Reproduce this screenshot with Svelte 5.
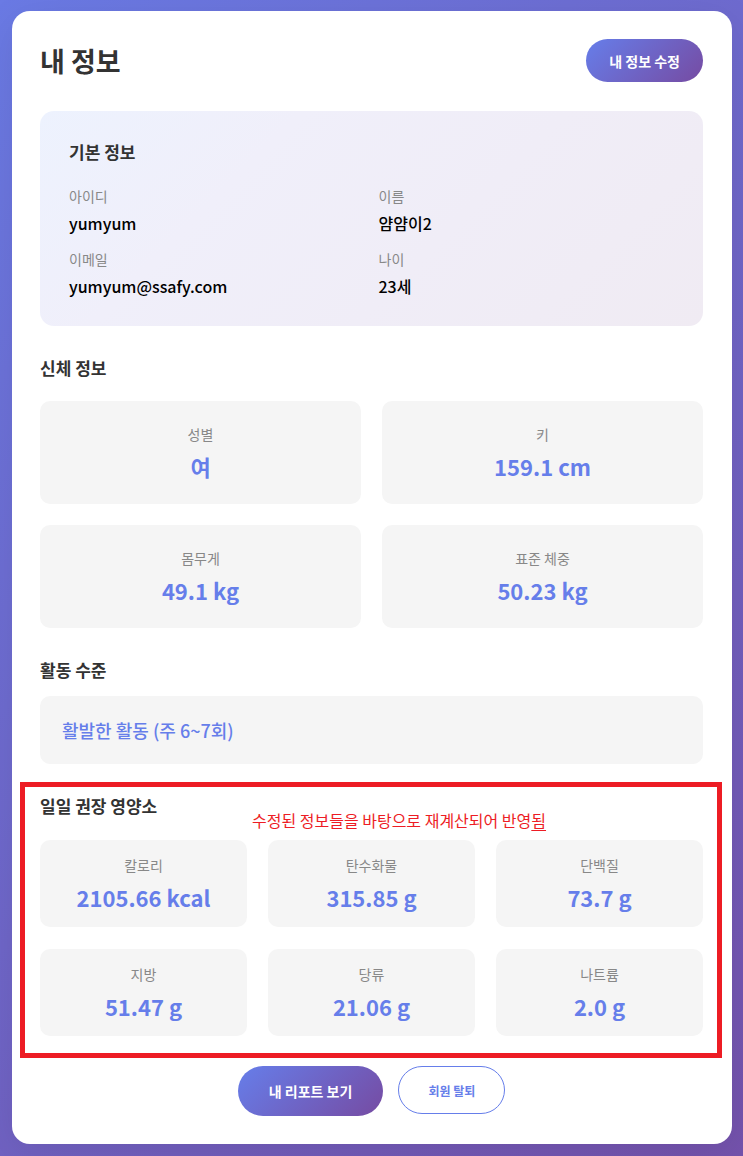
<script>
  const profile = [
    { label: '아이디', value: 'yumyum' },
    { label: '이름', value: '얌얌이2' },
    { label: '이메일', value: 'yumyum@ssafy.com' },
    { label: '나이', value: '23세' }
  ];
  const body = [
    { label: '성별', value: '여' },
    { label: '키', value: '159.1 cm' },
    { label: '몸무게', value: '49.1 kg' },
    { label: '표준 체중', value: '50.23 kg' }
  ];
  const nutrients = [
    { label: '칼로리', value: '2105.66 kcal' },
    { label: '탄수화물', value: '315.85 g' },
    { label: '단백질', value: '73.7 g' },
    { label: '지방', value: '51.47 g' },
    { label: '당류', value: '21.06 g' },
    { label: '나트륨', value: '2.0 g' }
  ];
</script>

<div class="page">
  <main class="card">
    <header>
      <h1>내 정보</h1>
      <button class="primary edit" type="button">내 정보 수정</button>
    </header>

    <section class="basic">
      <h2>기본 정보</h2>
      <dl class="profile">
        {#each profile as item}
          <div>
            <dt>{item.label}</dt>
            <dd>{item.value}</dd>
          </div>
        {/each}
      </dl>
    </section>

    <section class="body-info">
      <h2>신체 정보</h2>
      <dl class="tiles two">
        {#each body as item}
          <div class="tile">
            <dt>{item.label}</dt>
            <dd>{item.value}</dd>
          </div>
        {/each}
      </dl>
    </section>

    <section class="activity">
      <h2>활동 수준</h2>
      <p>활발한 활동 (주 6~7회)</p>
    </section>

    <section class="nutrition">
      <h2>일일 권장 영양소</h2>
      <p class="note">수정된 정보들을 바탕으로 재계산되어 반영<u>됨</u></p>
      <dl class="tiles three">
        {#each nutrients as item}
          <div class="tile">
            <dt>{item.label}</dt>
            <dd>{item.value}</dd>
          </div>
        {/each}
      </dl>
    </section>

    <footer>
      <button class="primary report" type="button">내 리포트 보기</button>
      <button class="outline" type="button">회원 탈퇴</button>
    </footer>
  </main>
</div>

<style>
  :global(body) {
    margin: 0;
    font-family: 'Noto Sans CJK KR', 'Noto Sans', sans-serif;
  }
  * {
    box-sizing: border-box;
  }
  .page {
    min-height: 100vh;
    padding: 11px 11px 12px 12px;
    overflow: hidden;
    background: linear-gradient(135deg, #6a7ae4 0%, #7452ac 100%);
  }
  .card {
    padding: 28px 29px 28px 28px;
    border-radius: 18px;
    background: #fff;
    box-shadow: 0 10px 40px rgba(0, 0, 0, 0.08);
  }
  header {
    display: flex;
    justify-content: space-between;
    align-items: center;
    margin-bottom: 29px;
  }
  h1, h2, p, dl, dd {
    margin: 0;
  }
  h1 {
    font-size: 27px;
    line-height: 40px;
    font-weight: 700;
    color: #333;
  }
  h2 {
    font-size: 17px;
    line-height: 24px;
    font-weight: 700;
    color: #333;
  }
  button {
    font-family: inherit;
    font-weight: 700;
    cursor: pointer;
  }
  .primary {
    border: 0;
    border-radius: 25px;
    color: #fff;
    font-size: 14px;
    background: linear-gradient(135deg, #667eea 0%, #764ba2 100%);
  }
  .edit {
    height: 43px;
    padding: 0 23px;
  }
  .basic {
    padding: 29px 29px 28px;
    border-radius: 14px;
    background: linear-gradient(135deg, #edf2fe 0%, #f0effa 30%, #f0edf7 60%, #f0ebf3 100%);
  }
  .profile {
    display: grid;
    grid-template-columns: 1fr 1fr;
    gap: 14px;
    margin-top: 22px;
  }
  dt {
    font-size: 14px;
    line-height: 20px;
    color: #888;
  }
  .profile dd {
    margin-top: 5px;
    font-size: 16px;
    line-height: 24px;
    font-weight: 500;
    color: #000;
  }
  .body-info {
    margin-top: 30px;
  }
  .tiles {
    display: grid;
    gap: 21px;
    text-align: center;
  }
  .two {
    grid-template-columns: 1fr 1fr;
    margin-top: 21px;
  }
  .tile {
    padding: 23px 8px 21px;
    border-radius: 10px;
    background: #f5f5f5;
  }
  .tile dd {
    margin-top: 5px;
    font-size: 22px;
    line-height: 34px;
    font-weight: 700;
    color: #667eea;
  }
  .activity {
    margin-top: 30px;
  }
  .activity p {
    margin-top: 14px;
    padding: 22px;
    border-radius: 10px;
    background: #f5f5f5;
    font-size: 18px;
    line-height: 24px;
    font-weight: 500;
    color: #667eea;
  }
  .nutrition {
    margin: 18px -19px 0 -20px;
    padding: 7px 14px 17px 15px;
    border: 5px solid #ed1c24;
  }
  .note {
    margin-top: -10px;
    padding-left: 212px;
    font-size: 16px;
    line-height: 24px;
    color: #ed1c24;
  }
  .note u {
    text-underline-offset: 3px;
  }
  .three {
    grid-template-columns: repeat(3, 1fr);
    row-gap: 22px;
    margin-top: 8px;
  }
  .three .tile {
    padding: 15px 4px 13px;
  }
  footer {
    display: flex;
    justify-content: center;
    align-items: flex-start;
    gap: 15px;
    margin-top: 8px;
  }
  .report {
    height: 50px;
    padding: 0 31px;
  }
  .outline {
    height: 48px;
    padding: 0 29px;
    border: 1px solid #667eea;
    border-radius: 25px;
    background: #fff;
    color: #667eea;
    font-size: 12px;
  }
</style>
